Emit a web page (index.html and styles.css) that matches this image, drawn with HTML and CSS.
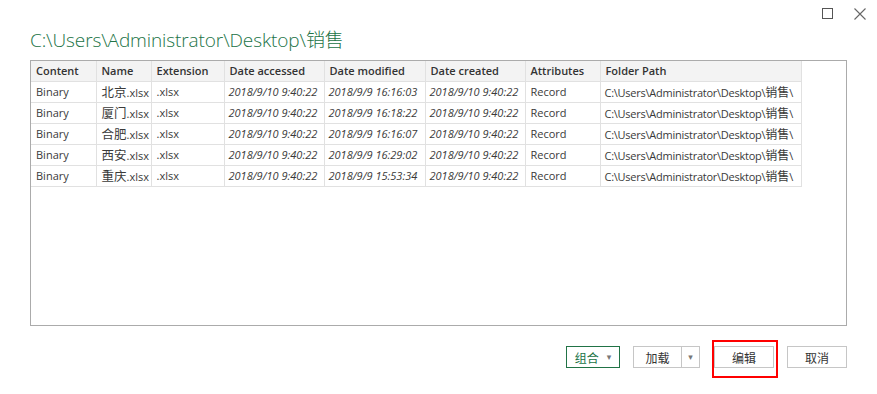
FILE: index.html
```html
<!DOCTYPE html>
<html lang="zh-CN">
<head>
<meta charset="utf-8">
<title>C:\Users\Administrator\Desktop\销售</title>
<link rel="stylesheet" href="styles.css">
</head>
<body>
<div class="dialog">
  <div class="titlebar">
    <span class="ctl ctl-max"><svg width="11" height="11" viewBox="0 0 11 11"><rect x="0.5" y="0.5" width="10" height="10" fill="none" stroke="#555" stroke-width="1"/></svg></span>
    <span class="ctl ctl-close"><svg width="12" height="12" viewBox="0 0 12 12"><path d="M0.5 0.5 L11.5 11.5 M11.5 0.5 L0.5 11.5" stroke="#666" stroke-width="1.1" fill="none"/></svg></span>
  </div>
  <h1 class="path-title">C:\Users\Administrator\Desktop\销售</h1>
  <div class="grid-box">
    <table class="grid">
      <colgroup>
        <col class="c1"><col class="c2"><col class="c3"><col class="c4"><col class="c5"><col class="c6"><col class="c7"><col class="c8">
      </colgroup>
      <thead>
        <tr><th>Content</th><th>Name</th><th>Extension</th><th>Date accessed</th><th>Date modified</th><th>Date created</th><th>Attributes</th><th>Folder Path</th></tr>
      </thead>
      <tbody>
        <tr><td>Binary</td><td><span class="cjk">北京</span>.xlsx</td><td>.xlsx</td><td class="dt">2018/9/10 9:40:22</td><td class="dt">2018/9/9 16:16:03</td><td class="dt">2018/9/10 9:40:22</td><td>Record</td><td class="fp">C:\Users\Administrator\Desktop\<span class="cjk">销售</span>\</td></tr>
        <tr><td>Binary</td><td><span class="cjk">厦门</span>.xlsx</td><td>.xlsx</td><td class="dt">2018/9/10 9:40:22</td><td class="dt">2018/9/9 16:18:22</td><td class="dt">2018/9/10 9:40:22</td><td>Record</td><td class="fp">C:\Users\Administrator\Desktop\<span class="cjk">销售</span>\</td></tr>
        <tr><td>Binary</td><td><span class="cjk">合肥</span>.xlsx</td><td>.xlsx</td><td class="dt">2018/9/10 9:40:22</td><td class="dt">2018/9/9 16:16:07</td><td class="dt">2018/9/10 9:40:22</td><td>Record</td><td class="fp">C:\Users\Administrator\Desktop\<span class="cjk">销售</span>\</td></tr>
        <tr><td>Binary</td><td><span class="cjk">西安</span>.xlsx</td><td>.xlsx</td><td class="dt">2018/9/10 9:40:22</td><td class="dt">2018/9/9 16:29:02</td><td class="dt">2018/9/10 9:40:22</td><td>Record</td><td class="fp">C:\Users\Administrator\Desktop\<span class="cjk">销售</span>\</td></tr>
        <tr><td>Binary</td><td><span class="cjk">重庆</span>.xlsx</td><td>.xlsx</td><td class="dt">2018/9/10 9:40:22</td><td class="dt">2018/9/9 15:53:34</td><td class="dt">2018/9/10 9:40:22</td><td>Record</td><td class="fp">C:\Users\Administrator\Desktop\<span class="cjk">销售</span>\</td></tr>
      </tbody>
    </table>
  </div>
  <div class="actions">
    <button class="btn btn-combine">组合 <span class="caret">▾</span></button>
    <div class="split">
      <button class="btn btn-load">加载</button><button class="btn btn-drop"><span class="caret">▾</span></button>
    </div>
    <div class="highlight-wrap">
      <button class="btn btn-edit">编辑</button>
      <span class="highlight"></span>
    </div>
    <button class="btn btn-cancel">取消</button>
  </div>
</div>
</body>
</html>
```
FILE: styles.css
```css
* { box-sizing: border-box; }
html, body { margin: 0; padding: 0; background: #fff; }
body {
  font-family: "Open Sans", "Noto Sans CJK SC", sans-serif;
  color: #333;
  width: 877px;
  height: 394px;
  overflow: hidden;
}
.dialog {
  display: flex;
  flex-direction: column;
  padding: 0 30px 0 30px;
}
.titlebar {
  display: flex;
  justify-content: flex-end;
  align-items: center;
  gap: 21px;
  height: 26px;
  margin-right: -19px;
  padding-top: 1px;
}
.ctl { display: flex; }
.path-title {
  margin: 0;
  font-family: "Open Sans", "Noto Sans CJK SC", sans-serif;
  font-weight: 300;
  font-size: 19px;
  line-height: 28px;
  color: #217346;
  height: 34px;
  letter-spacing: -0.1px;
}
.grid-box {
  width: 817px;
  height: 266px;
  border: 1px solid #ababab;
  overflow: hidden;
}
.grid {
  border-collapse: collapse;
  table-layout: fixed;
  width: 770px;
  font-size: 11px;
}
.c1 { width: 65px; } .c2 { width: 55px; } .c3 { width: 73px; } .c4 { width: 100px; }
.c5 { width: 101px; } .c6 { width: 100px; } .c7 { width: 75px; } .c8 { width: 201px; }
.grid th, .grid td {
  height: 20px;
  padding: 0 0 0 5px;
  border-right: 1px solid #e1e1e1;
  border-bottom: 1px solid #e1e1e1;
  white-space: nowrap;
  overflow: hidden;
  text-align: left;
  vertical-align: middle;
  line-height: 19px;
}
.grid th {
  background: #f3f3f3;
  font-weight: 600;
  color: #333;
}
.grid td { color: #3a3a3a; }
.grid td.dt { font-style: italic; padding-left: 4px; }
.cjk { font-family: "Noto Sans CJK SC", sans-serif; font-size: 12.5px; }
.grid td.fp { letter-spacing: -0.25px; padding-left: 4px; }
.grid td.fp .cjk { letter-spacing: 0; font-size: 12px; }
.actions {
  display: flex;
  justify-content: flex-end;
  align-items: center;
  margin-top: 20px;
  gap: 13px;
}
.btn {
  height: 22px;
  border: 1px solid #c6c6c6;
  background: #fff;
  font-family: "Noto Sans CJK SC", sans-serif;
  font-size: 12px;
  color: #333;
  padding: 0;
  display: flex;
  align-items: center;
  justify-content: center;
}
.caret { font-family: "DejaVu Sans", sans-serif; font-size: 9px; color: #777; }
.btn-combine {
  width: 54px;
  border-color: #217346;
  color: #217346;
  gap: 8px;
}
.split { display: flex; }
.btn-load { width: 49px; }
.btn-drop { width: 18px; border-left: none; }
.highlight-wrap { position: relative; margin-left: 1px; }
.btn-edit { width: 60px; }
.highlight {
  position: absolute;
  left: -2px;
  top: -6px;
  width: 66px;
  height: 38px;
  border: 2px solid #f00;
  pointer-events: none;
}
.btn-cancel { width: 60px; }
```
